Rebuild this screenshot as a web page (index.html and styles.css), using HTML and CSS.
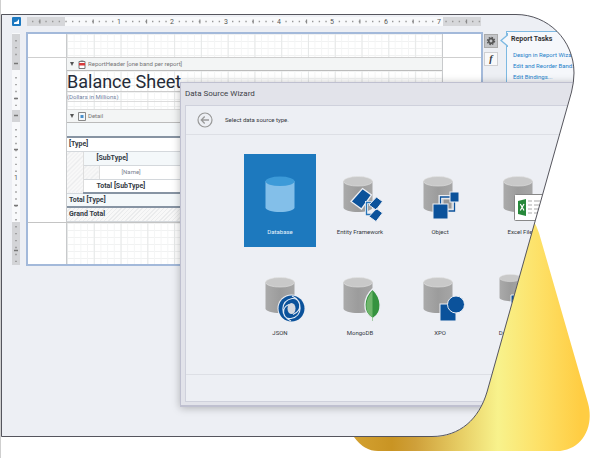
FILE: index.html
```html
<!DOCTYPE html>
<html lang="en">
<head>
<meta charset="utf-8">
<title>Data Source Wizard</title>
<link rel="stylesheet" href="styles.css">
</head>
<body>
<svg class="defs" aria-hidden="true">
  <defs>
    <linearGradient id="steel"><stop offset="0" stop-color="#aaa"/><stop offset=".5" stop-color="#9c9c9c"/><stop offset="1" stop-color="#a6a6a6"/></linearGradient>
    <symbol id="cylinder" viewBox="0 0 30 37">
      <path d="M.5 5v26.500C.5 34 7 36 15 36s14.500-2 14.500-4.500V5z" fill="url(#steel)"/>
      <ellipse cx="15" cy="5.300" rx="14.500" ry="4.800" fill="#c9c9c9" stroke="#e2e2e2" stroke-width=".6"/>
    </symbol>
  </defs>
</svg>
<main class="scene">
  <svg class="gold" width="600" height="458" aria-hidden="true">
    <defs><linearGradient id="goldfill" gradientUnits="userSpaceOnUse" x1="354" y1="0" x2="590" y2="0">
      <stop offset="0" stop-color="#d3a131"/><stop offset=".16" stop-color="#c99423"/><stop offset=".26" stop-color="#cfa03a"/><stop offset=".46" stop-color="#e8d067"/><stop offset=".61" stop-color="#f8f28c"/><stop offset=".78" stop-color="#fde168"/><stop offset=".96" stop-color="#ffcd43"/><stop offset="1" stop-color="#ffcd43"/>
    </linearGradient></defs>
    <path fill="url(#goldfill)" d="M528 217Q534 218 539 233L588 403C595 429 580 451 557 451H378Q364 451 354 437L440 400Z"/>
  </svg>
  <div class="frame">
    <section class="designer">
      <div class="corner">
        <svg width="9" height="9" viewBox="0 0 9 9" aria-hidden="true"><rect width="9" height="9" rx="1" fill="#1c78c0"/><path d="M2 7h5V2L5 4.500 2 5.500z" fill="#fff"/></svg>
      </div>
      <div class="ruler-h">
        <svg class="ruler-ink" width="454" height="9" aria-hidden="true">
          <rect x="0" y="0" width="38" height="9" fill="#d6d7da"/><rect x="38" width="378" height="9" fill="#f8f9fb"/><rect x="416" width="38" height="9" fill="#d6d7da"/>
          <path d="M5 4.500H454" stroke="#999" stroke-width="1.400" stroke-dasharray="1.400 5.267"/>
          <path d="M12.300 4.500H454" stroke="#888" stroke-width="4" stroke-dasharray="1.200 52.130"/>
          <g class="ruler-number"><rect x="90" width="4" height="9" fill="#f8f9fb"/><rect x="143" width="4" height="9" fill="#f8f9fb"/><rect x="196" width="5" height="9" fill="#f8f9fb"/><rect x="250" width="4" height="9" fill="#f8f9fb"/><rect x="303" width="4" height="9" fill="#f8f9fb"/><rect x="356" width="5" height="9" fill="#f8f9fb"/><rect x="410" width="4" height="9" fill="#f8f9fb"/>
          <text x="92" y="7">1</text><text x="145" y="7">2</text><text x="199" y="7">3</text><text x="252" y="7">4</text><text x="305" y="7">5</text><text x="359" y="7">6</text><text x="412" y="7">7</text></g>
        </svg>
      </div>
      <div class="ruler-v">
        <svg class="ruler-ink" width="8" height="232" aria-hidden="true">
          <rect width="8" height="232" fill="#f8f9fb"/><rect y="1" width="8" height="36" fill="#d3d4d7"/><rect y="77" width="8" height="12" fill="#d3d4d7"/><rect y="189" width="8" height="43" fill="#d3d4d7"/>
          <path d="M4 7v18M4 44v30M4 96v135" stroke="#8a8a8a" stroke-width="1.400" stroke-dasharray="1.400 5.530"/>
          <path d="M2 30.500h4M2 65.500h4M2 82.500h4M2 116.500h4M2 172.500h4M2 217.500h4" stroke="#777" stroke-width="1.500"/>
          <rect x="1" y="141" width="6" height="7" fill="#f8f9fb"/>
          <text class="ruler-number" x="4" y="147">1</text>
        </svg>
      </div>
      <article class="page">
        <div class="margin-top"><div class="body-column grid-paper"></div></div>
        <div class="body-column">
          <header class="band"><span class="caret"></span>
            <svg width="8" height="9" viewBox="0 0 8 9" aria-hidden="true"><path d="M1 1.500h6v7H1z" fill="#fff" stroke="#777"/><path d="M2.500.5h3v1h-3z" fill="#777"/><path d="M1 3h6v2.500H1z" fill="#d93a3a"/></svg>
            ReportHeader [one band per report]</header>
          <div class="grid-paper title-band">
            <h1>Balance Sheet</h1>
            <p class="subtitle">(Dollars in Millions)</p>
          </div>
          <header class="band"><span class="caret"></span>
            <svg width="8" height="9" viewBox="0 0 8 9" aria-hidden="true"><path d="M.5.5h7v8h-7z" fill="#f2f6fa" stroke="#888"/><path d="M2.500 3h3v3h-3z" fill="#4a90cc"/></svg>
            Detail</header>
          <table class="report">
            <colgroup><col class="indent"><col class="indent"><col></colgroup>
            <tr class="tint rule"><td colspan="3"></td></tr>
            <tr><td colspan="3">[Type]</td></tr>
            <tr class="tint"><td class="hatch" rowspan="3"></td><td class="sub" colspan="2">[SubType]</td></tr>
            <tr><td class="hatch"></td><td class="name">[Name]</td></tr>
            <tr class="rule"><td class="sub" colspan="2">Total [SubType]</td></tr>
            <tr class="tint rule"><td colspan="3">Total [Type]</td></tr>
            <tr><td class="hatch" colspan="3">Grand Total</td></tr>
          </table>
        </div>
        <div class="margin-bottom"><div class="body-column grid-paper"></div></div>
      </article>
      <div class="tools">
        <button class="tool active" aria-label="Tasks"><svg width="10" height="10" viewBox="0 0 10 10" aria-hidden="true"><circle cx="5" cy="5" r="3.600" fill="none" stroke="#555" stroke-width="1.200" stroke-dasharray="1.600 1.230"/><circle cx="5" cy="5" r="2.300" fill="none" stroke="#555" stroke-width="1.700"/></svg></button>
        <button class="tool" aria-label="Expressions"><i>f</i></button>
      </div>
      <aside class="tasks">
        <svg class="callout" width="8" height="14" viewBox="0 0 8 14" aria-hidden="true"><path d="M7.500 0V2L1 7.500 7.500 13v1" fill="#f5f7fb" stroke="#7db9e2" stroke-width="1.300"/></svg>
        <h2>Report Tasks</h2>
        <a href="#">Design in Report Wizard...</a>
        <a href="#">Edit and Reorder Bands...</a>
        <a href="#">Edit Bindings...</a>
      </aside>
    </section>

    <section class="wizard" role="dialog" aria-labelledby="wizard-title">
      <h2 id="wizard-title">Data Source Wizard</h2>
      <div class="wizard-body">
        <header class="wizard-head">
          <button class="back" aria-label="Back"><svg width="16" height="16" viewBox="0 0 16 16" aria-hidden="true"><circle cx="8" cy="8" r="7" fill="none" stroke="#999" stroke-width="1.200"/><path d="M12 8H4.500M7.700 4.500 4.300 8l3.400 3.500" fill="none" stroke="#999" stroke-width="1.300"/></svg></button>
          <p>Select data source type.</p>
        </header>
        <div class="sources">
          <button class="source selected">
            <svg width="48" height="48" aria-hidden="true"><path d="M9.500 7v26.500C9.500 36 16 38 24 38s14.500-2 14.500-4.500V7z" fill="#83bfe9"/><ellipse cx="24" cy="7.300" rx="14.500" ry="4.800" fill="#3c9ad8"/></svg>
            <span>Database</span></button>
          <button class="source">
            <svg width="48" height="48" aria-hidden="true"><use href="#cylinder" x="7" y="2" width="30" height="37"/>
              <path d="M26.500 14.500 35.500 21 25.500 35 15 27.500z" fill="#0b529b" stroke="#eceef3" stroke-width="1.300"/>
              <path d="M38 40.500H30.500V28.500H37" fill="none" stroke="#eceef3" stroke-width="3"/>
              <path d="M38 40.500H30.500V28.500H37" fill="none" stroke="#2876b9" stroke-width="1.300"/>
              <path d="M40.500 23l6 4.500-6.500 8.500-7-5zM40.500 34.500l6 4.500-6.500 8.500-7-5z" fill="#0b529b" stroke="#eceef3" stroke-width="1"/></svg>
            <span>Entity Framework</span></button>
          <button class="source">
            <svg width="48" height="48" aria-hidden="true"><use href="#cylinder" x="7" y="2" width="30" height="37"/>
              <path d="M24.500 30V23H36M38.500 26V37H31" fill="none" stroke="#eceef3" stroke-width="4"/>
              <rect x="27" y="25" width="9" height="10" fill="#999" stroke="#ddd"/>
              <path d="M24.500 30V23H36M38.500 26V37H31" fill="none" stroke="#0b529b" stroke-width="1.300"/>
              <rect x="34" y="18" width="9" height="10" fill="#0b529b" stroke="#eceef3"/><rect x="17" y="30" width="15" height="15" fill="#0b529b" stroke="#eceef3"/></svg>
            <span>Object</span></button>
          <button class="source">
            <svg width="48" height="48" aria-hidden="true"><use href="#cylinder" x="7" y="2" width="30" height="37"/>
              <rect x="18.500" y="20.500" width="29" height="26" rx="1" fill="#fff" stroke="#888"/>
              <path d="M32 27h4M38 27h6M32 31h4M38 31h6M32 35h4M38 35h6M32 39h4M38 39h6" stroke="#c6c6c6" stroke-width="1.500"/>
              <path d="M22 27l8-2v17l-8-2z" fill="#26883a"/><path d="M24.300 30l3.700 6.500M28 30l-3.700 6.500" stroke="#fff" stroke-width="1.200"/></svg>
            <span>Excel File</span></button>
          <button class="source">
            <svg width="48" height="48" aria-hidden="true"><use href="#cylinder" x="9" y="2" width="30" height="37"/>
              <circle cx="35.500" cy="33.500" r="14" fill="#eceef3"/><circle cx="35.500" cy="33.500" r="13" fill="#0b529b"/>
              <ellipse cx="35.500" cy="33.500" rx="4" ry="5.500" fill="#d5d8df"/>
              <path d="M35 46C24 41 24 26 36 23.500c9-1 11 12 1 16M36 21c11 5 11 20-1 22.500-9 1-10-11-2-14" fill="none" stroke="#e1e9f4" stroke-width="1.100"/></svg>
            <span>JSON</span></button>
          <button class="source">
            <svg width="48" height="48" aria-hidden="true"><use href="#cylinder" x="7" y="2" width="30" height="37"/>
              <path d="M36.500 14C27 23 26 37 36 43v4h1.500v-4C47 37 46 23 36.500 14z" fill="#35933f" stroke="#eceef3" stroke-width="1.400"/><path d="M36.500 16C29 24 28 37 36 42v4h.5z" fill="#6fb66c"/></svg>
            <span>MongoDB</span></button>
          <button class="source">
            <svg width="48" height="48" aria-hidden="true"><use href="#cylinder" x="7" y="2" width="30" height="37"/>
              <rect x="24" y="29" width="16" height="17" fill="#0b529b" stroke="#eceef3"/><circle cx="40" cy="29.500" r="8.500" fill="#0b529b" stroke="#eceef3"/></svg>
            <span>XPO</span></button>
          <button class="source">
            <svg width="48" height="48" aria-hidden="true"><use href="#cylinder" x="3" y="-1" width="23" height="28"/><use href="#cylinder" x="22" y="12" width="23" height="28"/>
              <path d="M15 20h8v8h-8z" fill="#0b529b" stroke="#eceef3"/></svg>
            <span>Data Federation</span></button>
        </div>
        <footer class="wizard-foot"></footer>
      </div>
    </section>
  </div>
  <svg class="outline" width="600" height="458" aria-hidden="true">
    <path d="M1.500 14.500H516C548 14.500 574 40 574 73Q574 82 571.500 92L487 392C479 419 460 436.500 432 436.500H1.500Z" fill="none" stroke="#55555d" stroke-width="1"/>
  </svg>
</main>
</body>
</html>
```
FILE: styles.css
```css
* { box-sizing: border-box; }

body {
  margin: 0;
  background: #fff;
  color: #34373e;
  font: 6px/10px Roboto, "Noto Sans", sans-serif;
}

h1, h2, p { margin: 0; }

button {
  padding: 0;
  border: 0;
  background: none;
  color: inherit;
  font: inherit;
}

.defs {
  position: absolute;
  width: 0;
  height: 0;
}

.scene {
  position: relative;
  min-height: 100vh;
  padding-top: 14px;
  border-left: 1px solid #cfcfcf;
  overflow: hidden;
}

.gold, .outline {
  position: absolute;
  top: 0;
  left: -1px;
}

.outline { pointer-events: none; }

.frame {
  position: relative;
  display: grid;
  background: #edeff4;
  clip-path: path("M0 0H515C547 0 573 26 573 59Q573 68 570 78L486 378C478 405 459 423 431 423H0Z");
}

.designer, .wizard {
  grid-area: 1 / 1;
  min-width: 0;
}

/* Report designer */
.designer {
  display: grid;
  grid-template-columns: 14px 457px 23px 1fr;
  grid-template-rows: 9px 234px;
  row-gap: 6px;
  align-content: start;
  padding: 3px 0 0 11px;
}

.ruler-h {
  grid-column: 2 / -1;
  padding-left: 1px;
}

.ruler-ink, .corner svg { display: block; }
.ruler-v { padding-top: 1px; }

.ruler-number {
  fill: #555;
  font-size: 7px;
  text-anchor: middle;
}

.page {
  display: flex;
  flex-direction: column;
  border: 2px solid #a3b9da;
  background: #fff;
}

.body-column {
  margin: 0 38px;
  border: solid #c8cacc;
  border-width: 0 1px;
}

.grid-paper {
  background-image:
    linear-gradient(90deg, #e6e8e8 1px, transparent 1px),
    linear-gradient(90deg, #f4f5f5 1px, transparent 1px),
    linear-gradient(#f1f2f2 1px, transparent 1px);
  background-size: calc(100% / 14) 100%, calc(100% / 56) 100%, 100% 7px;
}

.margin-top {
  height: 24px;
  border-bottom: 1px solid #cfcfcf;
}

.margin-top .body-column, .margin-bottom .body-column { height: 100%; }

.margin-bottom {
  flex: 1;
  border-top: 1px solid #c4c4c4;
}

.band {
  display: flex;
  align-items: center;
  gap: 2px;
  height: 13px;
  padding-left: 3px;
  border-bottom: 1px solid #bbb;
  background: #f3f5f5;
  color: #777;
}

.caret {
  margin-right: 2px;
  border: solid transparent;
  border-width: 4px 2px 0;
  border-top-color: #555;
}

.title-band {
  height: 39px;
  border-bottom: 1px solid #ddd;
}

.title-band h1 {
  height: 21px;
  border-bottom: 1px solid #ccc;
  color: #252b38;
  font-size: 18px;
  font-weight: 400;
  line-height: 21px;
  white-space: nowrap;
}

.subtitle {
  height: 10px;
  border-bottom: 1px solid #ddd;
  color: #7080a0;
  font-size: 6px;
  line-height: 9px;
}

.report {
  width: 100%;
  border-collapse: collapse;
  table-layout: fixed;
  font-size: 7px;
  font-weight: 700;
}

.indent { width: 16px; }

.report td {
  height: 14px;
  padding: 0 0 0 2px;
  border-bottom: 1px solid #d4d8dc;
  color: #333a45;
  line-height: 10px;
}

.report .tint td { background-color: #f4f8fa; }
.report .rule td { border-bottom: 2px solid #8794a3; }
.report .sub { padding-left: 13px; }

.report .name {
  padding-left: 22px;
  color: #7a828e;
  font-size: 6px;
  font-weight: 400;
}

.report .hatch {
  border-right: 1px solid #ddd;
  background: repeating-linear-gradient(135deg, #f8f8f8 0 2px, #ebeced 2px 3px);
}

.tools {
  display: flex;
  flex-direction: column;
  gap: 4px;
  padding: 2px 0 0 1px;
}

.tool {
  display: grid;
  place-items: center;
  width: 14px;
  height: 14px;
  border: 1px solid #cfcfd2;
  background: #f8f8f9;
  font: 700 10px/10px "Liberation Serif", serif;
}

.tool.active {
  border-color: #aaa;
  background: #c4c5c8;
}

.tasks {
  position: relative;
  align-self: start;
  display: flex;
  flex-direction: column;
  height: 60px;
  margin-top: -1px;
  padding: 2px 0 0 4px;
  border: solid #7db9e2;
  border-width: 1px 0 0 1px;
  background: #f5f7fb;
  white-space: nowrap;
}

.callout {
  position: absolute;
  top: 1px;
  left: -7px;
}

.tasks h2 {
  margin-bottom: 5px;
  color: #333;
  font-size: 7px;
  line-height: 10px;
}

.tasks a {
  padding-left: 2px;
  color: #2380c9;
  line-height: 11px;
  text-decoration: none;
}

/* Wizard window */
.wizard {
  z-index: 1;
  margin: 68px 0 30px 179px;
  padding: 0 0 3px 4px;
  border: solid #bfc0d0;
  border-width: 1px 0 2px 1px;
  background: #e2e3ea;
  box-shadow: 0 1px 8px #0004;
}

.wizard h2 {
  color: #3c3f48;
  font-size: 8px;
  font-weight: 400;
  line-height: 22px;
}

.wizard-body {
  border: 1px solid #cfd1dc;
  background: #edeff4;
}

.wizard-head {
  display: flex;
  align-items: center;
  gap: 12px;
  height: 29px;
  padding-left: 11px;
  border-bottom: 1px solid #dddfe5;
}

.back {
  width: 16px;
  height: 16px;
}

.back svg { display: block; }

.sources {
  display: grid;
  grid-template-columns: repeat(4, 72px);
  gap: 8px;
  padding: 19px 0 26px 58px;
}

.source {
  display: flex;
  flex-direction: column;
  align-items: center;
  gap: 5px;
  height: 93px;
  padding-top: 20px;
  font-size: 6px;
  line-height: 10px;
  white-space: nowrap;
}

.source svg { overflow: visible; }

.source.selected {
  background: #1d79be;
  color: #e9f4fc;
}

.wizard-foot {
  height: 27px;
  border-top: 1px solid #dddfe5;
}
```
